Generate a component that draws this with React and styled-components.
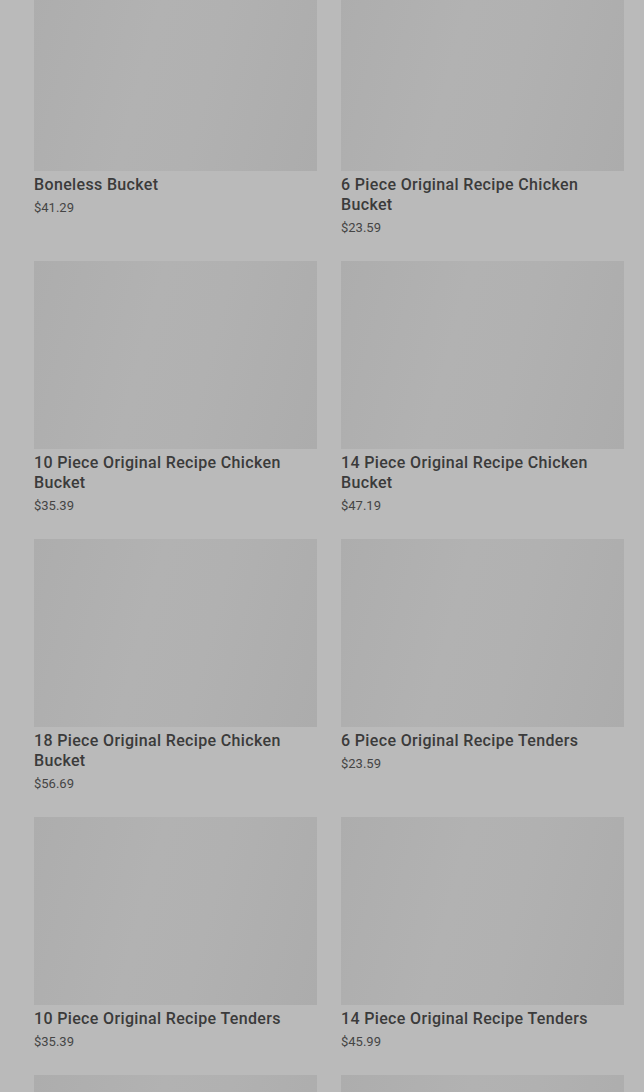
import styled, { createGlobalStyle } from "styled-components";

const GlobalStyle = createGlobalStyle`
  html, body {
    margin: 0;
    padding: 0;
    background: #bababa;
    overflow: hidden;
  }
  * { box-sizing: border-box; }
`;

const products = [
  { name: "Boneless Bucket", price: 41.29 },
  { name: "6 Piece Original Recipe Chicken Bucket", price: 23.59 },
  { name: "10 Piece Original Recipe Chicken Bucket", price: 35.39 },
  { name: "14 Piece Original Recipe Chicken Bucket", price: 47.19 },
  { name: "18 Piece Original Recipe Chicken Bucket", price: 56.69 },
  { name: "6 Piece Original Recipe Tenders", price: 23.59 },
  { name: "10 Piece Original Recipe Tenders", price: 35.39 },
  { name: "14 Piece Original Recipe Tenders", price: 45.99 },
  { name: "Popcorn Nuggets Bucket", price: 29.99 },
  { name: "Family Fill Up", price: 39.99 },
];

const App = () => {
  return (
    <Page>
      <GlobalStyle />
      <Grid>
        {products.map(({ name, price }) => (
          <Card key={name}>
            <Thumb />
            <Title>{name}</Title>
            <Price>${price.toFixed(2)}</Price>
          </Card>
        ))}
      </Grid>
    </Page>
  );
};

export default App;

const Page = styled.main`
  width: 644px;
  height: 1092px;
  overflow: hidden;
  background: #bababa;
  font-family: Roboto, "Liberation Sans", sans-serif;
`;

// list is scrolled a little, so the first row starts above the top edge
const Grid = styled.section`
  margin-top: -17.5px;
  padding: 0 20px 0 34px;
  display: grid;
  grid-template-columns: 283px 283px;
  column-gap: 24px;
  row-gap: 23.5px;
`;

const Card = styled.article`
  display: flex;
  flex-direction: column;
`;

const Thumb = styled.div`
  width: 100%;
  height: 188px;
  background: linear-gradient(
    105deg,
    #adadad 0%,
    #b2b2b2 40%,
    #b1b1b1 60%,
    #acacac 100%
  );
`;

const Title = styled.h3`
  margin: 4.5px 0 0;
  font-size: 16px;
  line-height: 20px;
  font-weight: 500;
  letter-spacing: 0.35px;
  color: #3b3b3b;
`;

const Price = styled.p`
  margin: 4px 0 0;
  font-size: 13px;
  line-height: 18px;
  color: #454545;
`;
